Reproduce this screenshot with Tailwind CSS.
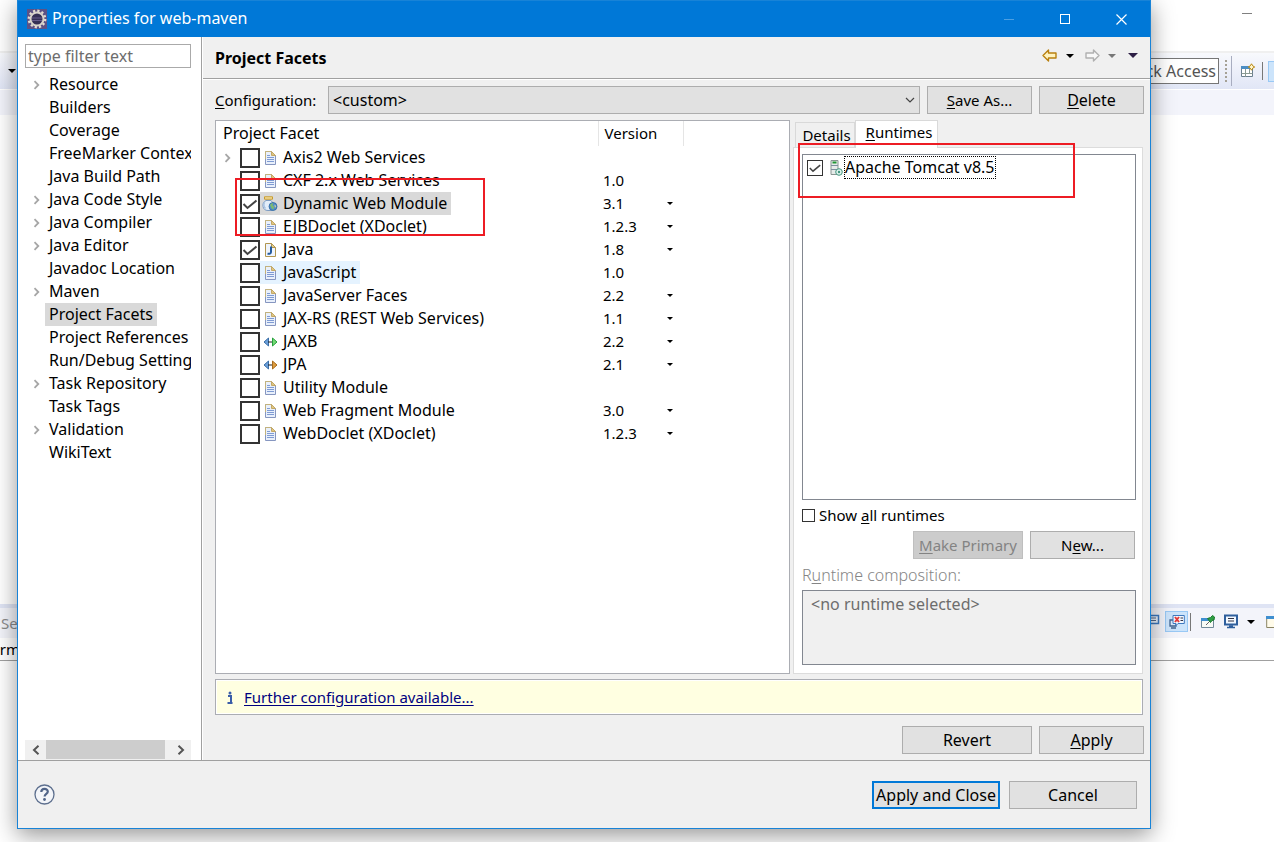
<!DOCTYPE html>
<html lang="en">
<head>
<meta charset="utf-8">
<title>Properties for web-maven</title>
<script src="https://cdn.jsdelivr.net/npm/@tailwindcss/browser@4"></script>
</head>
<body class="relative h-screen overflow-hidden bg-white font-['Noto_Sans',sans-serif] text-[15px] leading-[23px] text-black">

<svg class="hidden" aria-hidden="true">
  <symbol id="doc" viewBox="0 0 16 16">
    <path d="M3.500 1.500h6l4 4v9h-10z" fill="#e9f0fb" stroke="#8696c0"/>
    <path d="M3.500 9V1.500h6l4 4" fill="none" stroke="#c3b27c"/>
    <path d="M9.500 1.500v4h4z" fill="#e0c781" stroke="#c3a868"/>
    <path d="M5 5.500h3M5 7.500h7M5 9.500h7M5 11.500h7" stroke="#7f9bd3"/>
  </symbol>
  <symbol id="web" viewBox="0 0 16 16">
    <path d="M4 4.500C1.500 6 .5 8 1 10.500c.5 2.500 2 4 5 4h4c2-1 3-5 1-7.500L9 4.500z" fill="#e2edf9" stroke="#7d9cc2"/>
    <path d="M2.500 6.500c-1 2-1 4 1 6" fill="none" stroke="#a9c3e2" stroke-width="1.500"/>
    <path d="M2.500 .8h8v2.400h-8z" fill="#f7e3a2" stroke="#c79a2c"/>
    <circle cx="11" cy="10.500" r="4" fill="#4f8fc9" stroke="#2f669f" stroke-width=".8"/>
    <path d="M8 9c1-1.500 2.500-2 3-1.500l-.5 2 1.500 1-.5 3-1.800-1z" fill="#7dbb6e"/>
    <path d="M12.500 8.500l1.500 1.500-1 2z" fill="#f0dc8e"/>
  </symbol>
  <symbol id="java" viewBox="0 0 16 16">
    <path d="M3.500 1.500h6l4 4v9h-10z" fill="#eef4fd" stroke="#b19650"/>
    <path d="M9.500 1.500v4h4z" fill="#e5cf8c" stroke="#b19650"/>
    <path d="M9 4.500v5.500c0 1.700-1.500 2-3.500 1.700" fill="none" stroke="#245b9e" stroke-width="2"/>
  </symbol>
  <symbol id="jaxb" viewBox="0 0 16 16">
    <path d="M6.500 4v8l-4.500-4z" fill="#6b9fd8" stroke="#3a6ea8"/><path d="M6 8h5" stroke="#222"/>
    <path d="M10.500 4v8l4.500-4z" fill="#73d873" stroke="#27a13c"/>
  </symbol>
  <symbol id="jpa" viewBox="0 0 16 16">
    <path d="M6.500 4v8l-4.500-4z" fill="#6b9fd8" stroke="#3a6ea8"/><path d="M6 8h5" stroke="#222"/>
    <path d="M10.500 4v8l4.500-4z" fill="#dc9c3f" stroke="#a96c1c"/>
  </symbol>
  <symbol id="chev" viewBox="0 0 8 10"><path d="M1.500 1.200L5.300 5 1.500 8.800" fill="none" stroke="#a6a6a6" stroke-width="1.800"/></symbol>
  <symbol id="tick" viewBox="0 0 20 20"><path d="M3.500 10l4 4 9-7.500" fill="none" stroke="#444" stroke-width="2"/></symbol>
  <symbol id="down" viewBox="0 0 8 4"><path d="M0 0h8L4 4z" fill="currentColor"/></symbol>
  <symbol id="arrow" viewBox="0 0 16 13"><path d="M1 6.500L6.500 1v3H14v5H6.500v3z" stroke="currentColor" stroke-width="1.400" stroke-linejoin="round"/></symbol>
</svg>

<!-- Workbench window behind the dialog -->
<div class="flex h-full flex-col" aria-hidden="true">
  <div class="flex h-[51px] shrink-0 justify-end pr-[22px] pt-[13px]"><span class="h-px w-[10px] bg-[#808080]"></span></div>
  <div class="flex h-[38px] shrink-0 items-center justify-between border-t-2 border-[#f0f0f0] bg-linear-to-b from-[#f8f9fd] to-[#e1e6f6] pl-2">
    <svg class="h-1 w-2"><use href="#down"/></svg>
    <div class="flex items-center">
      <div class="flex h-[26px] w-[120px] items-center justify-end border border-[#767676] bg-white pr-[2px] text-base text-[#555]">Quick Access</div>
      <div class="ml-[6px] h-[22px] border-l-2 border-dotted border-[#a5a196]"></div>
      <div class="ml-1 h-[30px] w-px bg-[#a8adc0]"></div>
      <svg class="ml-2 h-4 w-4" viewBox="0 0 16 16"><path d="M1.500 3.500h11v10h-11z" fill="#fff" stroke="#6a7f8e"/><path d="M1 3h12v3H1z" fill="#4c8ec4"/><path d="M5.500 6v8M1.500 10.500h11M9.500 6v5" stroke="#8a9a92"/><path d="M11.500.8l1.200 2 2 1.200-2 1.200-1.200 2-1.200-2-2-1.200 2-1.200z" fill="#fff6cf" stroke="#b8860b"/></svg>
      <div class="ml-[6px] h-[18px] w-px bg-[#777]"></div>
      <div class="ml-[5px] h-[21px] w-[6px] border border-r-0 border-[#99c9f5] bg-[#cce4fb]"></div>
    </div>
  </div>
  <div class="h-[26px] shrink-0 border-t border-white bg-[#f3f4fb]"></div>
  <div class="flex-1"></div>
  <div class="flex h-[34px] shrink-0 items-center justify-between border-t-4 border-[#dfe4f4] bg-[#f3f4fa]">
    <div class="flex w-6 justify-end text-[#8a8a8a]">Ser</div>
    <div class="flex h-full items-center pb-[3px]">
      <svg class="h-4 w-5" viewBox="0 0 20 16"><path d="M4.500 1.500h13v8h-13z" fill="#eaf2fc" stroke="#3d79c0" stroke-width="1.500"/><path d="M7 4h8M7 6.500h8M4 12h6" stroke="#55698a"/></svg>
      <div class="ml-1 flex h-[21px] w-[23px] items-center justify-center border border-[#99c9f5] bg-[#cce4fb]">
        <svg class="h-4 w-4" viewBox="0 0 16 16"><path d="M1 6h6v6H1zM2 14h5" fill="#dbe9fa" stroke="#41638f" stroke-width="1.300"/><path d="M4 1.500h11.300v8H9l-2 2v-2H4z" fill="#f3f8ff" stroke="#3d79c0"/><path d="M6 3l4 5M10 3L6 8" stroke="#e23b3b" stroke-width="2"/><path d="M11.500 4h2.500M11.500 6.500h2.500" stroke="#334"/></svg>
      </div>
      <div class="ml-[2px] h-[18px] w-px bg-[#777]"></div>
      <svg class="ml-[9px] h-4 w-4" viewBox="0 0 16 16"><path d="M1.500 4.500h12v9h-12z" fill="#f8fbf6" stroke="#718a99"/><path d="M1 4h9v3H1z" fill="#3f8fd0"/><path d="M6 11l4-4" stroke="#666"/><path d="M7.500 4.500l3 4 1.500-2 2-.5.5-3-2-1.500-2 2z" fill="#2f9e44" stroke="#1c7a30"/></svg>
      <svg class="ml-[7px] h-4 w-4" viewBox="0 0 16 16"><path d="M2 1.500h12v9H2z" fill="#f2f8ff" stroke="#2f5f9d" stroke-width="2"/><path d="M5 4.500h6M5 7h6" stroke="#334"/><path d="M4 13.500h8M6 12h4" stroke="#2f5f9d" stroke-width="1.500"/></svg>
      <svg class="ml-2 h-1 w-2"><use href="#down"/></svg>
      <svg class="ml-[11px] h-4 w-2" viewBox="0 0 8 16"><path d="M8 2.500H.7v11H8" fill="#fffbea" stroke="#8a8464"/><path d="M0 2h8v3H0z" fill="#3f8fd0"/></svg>
    </div>
  </div>
  <div class="flex h-[23px] shrink-0 items-center border-b border-[#a0a0a0] bg-white"><span class="flex w-5 justify-end">erm</span></div>
  <div class="h-[181px] shrink-0 bg-white"></div>
</div>

<!-- Properties dialog -->
<main class="absolute top-0 right-[123px] bottom-[13px] left-[17px] flex flex-col border border-[#1883d7] bg-[#f0f0f0] shadow-[0_6px_22px_rgba(0,0,0,0.42)]">
  <header class="flex h-9 shrink-0 items-center bg-[#0078d7] pl-[9px] text-white">
    <svg class="h-5 w-5" viewBox="0 0 20 20"><path d="M0 0h20v20H0z" fill="#5c5285"/><circle cx="10" cy="10" r="8.200" fill="none" stroke="#e2ddd0" stroke-width="2.400" stroke-dasharray="2.200 2.100"/><circle cx="10" cy="10" r="6.500" fill="#353055" stroke="#d8d4cb" stroke-width="2"/><path d="M5 9h10M5 11.500h10" stroke="#675d8c"/></svg>
    <h1 class="ml-[5px] flex-1 pb-[2px] text-base leading-[23px]">Properties for web-maven</h1>
    <button class="flex w-14 justify-center" aria-label="Minimize"><span class="h-px w-[10px] bg-[#4c9fe2]"></span></button>
    <button class="flex w-14 justify-center" aria-label="Maximize"><span class="h-[10px] w-[10px] border border-white"></span></button>
    <button class="flex w-[57px] justify-center" aria-label="Close"><svg class="h-[11px] w-[11px]" viewBox="0 0 11 11"><path d="M.5.5l10 10M10.500.5l-10 10" stroke="#fff" stroke-width="1.200"/></svg></button>
  </header>

  <div class="flex min-h-0 flex-1">
    <aside class="flex w-[184px] shrink-0 flex-col border-r border-[#a0a0a0] bg-white pt-[7px] pr-[10px] pl-[7px]">
      <input class="h-6 w-full shrink-0 border border-[#aaa] px-[2px] text-base placeholder:text-[#6d6d6d]" placeholder="type filter text" aria-label="Filter">
      <ul id="nav" class="mt-[5px] flex-1 overflow-hidden text-base"></ul>
      <div class="flex h-5 shrink-0 bg-[#f0f0f0]">
        <button class="flex w-[21px] items-center justify-center" aria-label="Scroll left"><svg class="h-[10px] w-2" viewBox="0 0 8 10"><path d="M6.500.8L2 5l4.500 4.200" fill="none" stroke="#555" stroke-width="2"/></svg></button>
        <div class="flex-1"><div class="h-[19px] w-[119px] bg-[#cdcdcd]"></div></div>
        <button class="flex w-[21px] items-center justify-center" aria-label="Scroll right"><svg class="h-[10px] w-2" viewBox="0 0 8 10"><path d="M1.500.8L6 5 1.500 9.200" fill="none" stroke="#555" stroke-width="2"/></svg></button>
      </div>
    </aside>

    <section class="flex min-w-0 flex-1 flex-col border-l border-white">
      <div class="flex h-[42px] shrink-0 items-center border-b border-[#a0a0a0] pr-3 pl-3">
        <h2 class="flex-1 pt-[2px] text-base leading-[23px] font-bold">Project Facets</h2>
        <div class="flex items-center pb-1">
          <button class="text-[#b9800f]" aria-label="Back"><svg class="h-[13px] w-4" fill="#fff3bf"><use href="#arrow"/></svg></button>
          <button class="ml-2" aria-label="Back history"><svg class="h-1 w-2"><use href="#down"/></svg></button>
          <button class="ml-[10px] text-[#b0b0b0]" aria-label="Forward"><svg class="h-[13px] w-4 -scale-x-100" fill="#f8f8f8"><use href="#arrow"/></svg></button>
          <button class="ml-2 text-[#777]" aria-label="Forward history"><svg class="h-1 w-2"><use href="#down"/></svg></button>
          <button class="ml-3 text-[#2d1f45]" aria-label="View menu"><svg class="h-[5px] w-[10px]" viewBox="0 0 10 5"><path d="M0 0h10L5 5z" fill="currentColor"/></svg></button>
        </div>
      </div>

      <div class="flex min-h-0 flex-1 flex-col border-t border-white pt-[6px] pr-[6px] pb-[6px] pl-3">
        <div class="flex h-7 shrink-0 items-center">
          <label for="cfg" class="w-[113px]"><u class="underline-offset-2">C</u>onfiguration:</label>
          <div class="relative h-7 flex-1">
            <select id="cfg" class="h-7 w-full appearance-none border border-[#adadad] bg-[#e1e1e1] pl-1 text-base"><option>&lt;custom&gt;</option></select>
            <svg class="pointer-events-none absolute top-[11px] right-[5px] h-[7px] w-[10px]" viewBox="0 0 10 7"><path d="M1 1l4 4 4-4" fill="none" stroke="#444" stroke-width="1.200"/></svg>
          </div>
          <button class="ml-[7px] h-7 w-[105px] border border-[#adadad] bg-[#e1e1e1]"><u class="underline-offset-2">S</u>ave As...</button>
          <button class="ml-[7px] h-7 w-[105px] border border-[#adadad] bg-[#e1e1e1] text-base"><u class="underline-offset-2">D</u>elete</button>
        </div>

        <div class="mt-[6px] mr-px flex min-h-0 flex-1 gap-[3px]">
          <div class="relative min-w-0 flex-1 border border-[#abadb3] bg-white">
            <table class="w-full table-fixed text-base leading-[23px]">
              <colgroup><col class="w-[382px]"><col class="w-[85px]"><col></colgroup>
              <thead><tr class="h-[25px] text-left">
                <th class="border-r border-[#e5e5e5] p-0 pl-[7px] font-normal">Project Facet</th>
                <th class="border-r border-[#e5e5e5] p-0 pl-[6px] text-[15px] font-normal">Version</th><th></th>
              </tr></thead>
              <tbody id="facets"></tbody>
            </table>
            <div class="pointer-events-none absolute top-[57px] left-[19px] h-[58px] w-[250px] border-2 border-[#ed1c24]"></div>
          </div>

          <div class="relative flex w-[350px] shrink-0 flex-col">
            <div class="flex h-[27px] shrink-0 items-end pl-[2px]" role="tablist">
              <button role="tab" class="h-[25px] w-[60px] border border-b-0 border-[#d9d9d9] pl-[3px]">De<u class="underline-offset-2">t</u>ails</button>
              <button role="tab" aria-selected="true" class="z-10 -mb-px h-7 w-[83px] border border-b-0 border-[#d9d9d9] bg-white pb-1 pl-[5px]"><u class="underline-offset-2">R</u>untimes</button>
            </div>
            <div class="flex min-h-0 flex-1 flex-col border border-[#dcdcdc] bg-white px-2 pt-[6px] pb-2">
              <div class="mr-[-2px] flex-1 border border-[#828790] px-1 pt-[2px]">
                <label class="flex items-center">
                  <span class="grid"><input type="checkbox" checked class="col-start-1 row-start-1 h-4 w-4 appearance-none border border-[#333] bg-white"><svg class="pointer-events-none col-start-1 row-start-1 h-4 w-4"><use href="#tick"/></svg></span>
                  <svg class="ml-[7px] h-4 w-[13px]" viewBox="0 0 13 16"><path d="M1 .5h7v14H1z" fill="#e6ebe9" stroke="#899491"/><path d="M2.500 2.500h4" stroke="#219632" stroke-width="2"/><path d="M1 5.500h7M1 9.500h7" stroke="#7d8f9d"/><circle cx="9" cy="12" r="3.300" fill="#dff2ec" stroke="#42967e"/><circle cx="9" cy="12" r="1.200" fill="#42967e"/></svg>
                  <span class="ml-[2px] h-[21px] text-base leading-[21px] outline-1 outline-dotted outline-black">Apache Tomcat v8.5</span>
                </label>
              </div>
              <label class="mt-1 flex h-[23px] items-center"><input type="checkbox" class="mr-[4px] h-[13px] w-[13px] appearance-none border border-[#333] bg-white"><span>Show <u class="underline-offset-2">a</u>ll runtimes</span></label>
              <div class="mt-1 flex justify-end gap-[7px]">
                <button disabled class="h-7 w-[110px] border border-[#bfbfbf] bg-[#ccc] text-[#838383]"><u class="underline-offset-2">M</u>ake Primary</button>
                <button class="mr-[-1px] h-7 w-[105px] border border-[#adadad] bg-[#e1e1e1]">N<u class="underline-offset-2">e</u>w...</button>
              </div>
              <label for="comp" class="mt-[5px] mb-[3px] text-base leading-[23px] font-light text-[#858585]">R<u class="underline-offset-2">u</u>ntime composition:</label>
              <textarea id="comp" readonly class="mr-[-2px] h-[75px] resize-none border border-[#828790] bg-[#f0f0f0] px-2 py-[2px] text-base leading-[23px] text-[#6d6d6d]">&lt;no runtime selected&gt;</textarea>
            </div>
            <div class="pointer-events-none absolute top-[23px] left-[5px] z-20 h-[55px] w-[277px] border-2 border-[#ed1c24]"></div>
          </div>
        </div>

        <div class="mt-[5px] mr-px flex h-9 shrink-0 items-center border border-[#abadb3] bg-[#ffffe1] pl-[11px] outline-1 -outline-offset-2 outline-white">
          <svg class="h-[13px] w-[6px]" viewBox="0 0 6 13"><path d="M1 5h3v7M.5 12h5" fill="none" stroke="#3a5da8" stroke-width="2"/><circle cx="3" cy="2" r="1.500" fill="#3a5da8"/></svg>
          <a href="#" class="ml-[11px] text-[#000080] underline underline-offset-2">Further configuration available...</a>
        </div>
        <div class="mt-[11px] flex shrink-0 justify-end gap-[7px]">
          <button class="h-7 w-[130px] border border-[#adadad] bg-[#e1e1e1] text-base">Revert</button>
          <button class="h-7 w-[105px] border border-[#adadad] bg-[#e1e1e1] text-base"><u class="underline-offset-2">A</u>pply</button>
        </div>
      </div>
    </section>
  </div>

  <footer class="flex h-[68px] shrink-0 items-center border-t border-[#a0a0a0] pr-[13px] pl-4">
    <button aria-label="Help"><svg class="h-[21px] w-[21px]" viewBox="0 0 21 21"><circle cx="10.500" cy="10.500" r="9.500" fill="#f3f5f9" stroke="#5d6f8e" stroke-width="1.300"/><path d="M7.300 8c0-4 6.500-4 6.500-.5 0 2.500-3.200 2.200-3.200 5" fill="none" stroke="#506488" stroke-width="2.200"/><circle cx="10.500" cy="15.500" r="1.400" fill="#506488"/></svg></button>
    <div class="ml-auto flex gap-[9px]">
      <button class="h-7 w-32 border-2 border-[#0078d7] bg-[#e1e1e1] text-base whitespace-nowrap">Apply and Close</button>
      <button class="h-7 w-32 border border-[#adadad] bg-[#e1e1e1] text-base">Cancel</button>
    </div>
  </footer>
</main>

<script>
const pages = ['>Resource','Builders','Coverage','FreeMarker Context','Java Build Path','>Java Code Style','>Java Compiler','>Java Editor','Javadoc Location','>Maven','Project Facets','Project References','Run/Debug Settings','>Task Repository','Task Tags','>Validation','WikiText'];
document.getElementById('nav').innerHTML = pages.map(p => {
  const open = p[0] === '>', name = open ? p.slice(1) : p;
  return `<li class="flex h-[23px] items-center leading-[23px] whitespace-nowrap"><span class="w-5 shrink-0 pl-2">${open ? '<svg class="h-[10px] w-2"><use href="#chev"/></svg>' : ''}</span><a href="#" class="px-1 ${name === 'Project Facets' ? 'bg-[#d9d9d9]' : ''}">${name}</a></li>`;
}).join('');

// name, icon, version, has version menu, checked, label background
const facets = [
  ['Axis2 Web Services','doc','',0,0,''],
  ['CXF 2.x Web Services','doc','1.0',0,0,''],
  ['Dynamic Web Module','web','3.1',1,1,'bg-[#d9d9d9]'],
  ['EJBDoclet (XDoclet)','doc','1.2.3',1,0,''],
  ['Java','java','1.8',1,1,''],
  ['JavaScript','doc','1.0',0,0,'bg-[#e5f3ff]'],
  ['JavaServer Faces','doc','2.2',1,0,''],
  ['JAX-RS (REST Web Services)','doc','1.1',1,0,''],
  ['JAXB','jaxb','2.2',1,0,''],
  ['JPA','jpa','2.1',1,0,''],
  ['Utility Module','doc','',0,0,''],
  ['Web Fragment Module','doc','3.0',1,0,''],
  ['WebDoclet (XDoclet)','doc','1.2.3',1,0,'']];
document.getElementById('facets').innerHTML = facets.map(([n,icon,v,menu,on,bg],i) => `
<tr class="h-[23px]">
  <td class="p-0"><div class="flex h-[23px] items-center">
    <span class="w-6 shrink-0 pl-2">${i ? '' : '<svg class="h-[10px] w-2"><use href="#chev"/></svg>'}</span>
    <label class="flex items-center whitespace-nowrap"><span class="grid"><input type="checkbox" ${on ? 'checked' : ''} class="col-start-1 row-start-1 h-5 w-5 appearance-none border-2 border-[#333] bg-white">${on ? '<svg class="pointer-events-none col-start-1 row-start-1 h-5 w-5"><use href="#tick"/></svg>' : ''}</span>
    <span class="flex h-[23px] items-center pr-1 pl-[2px] ${bg}"><svg class="mr-[5px] h-4 w-4"><use href="#${icon}"/></svg>${n}</span></label>
  </div></td>
  <td class="p-0"><div class="flex h-[23px] items-center justify-between pr-[10px] pl-[5px] text-[15px]">${v}${menu ? `<button aria-label="Choose version of ${n}"><svg class="h-[3px] w-[6px]" viewBox="0 0 8 4"><use href="#down"/></svg></button>` : ''}</div></td>
  <td></td>
</tr>`).join('');
</script>
</body>
</html>
